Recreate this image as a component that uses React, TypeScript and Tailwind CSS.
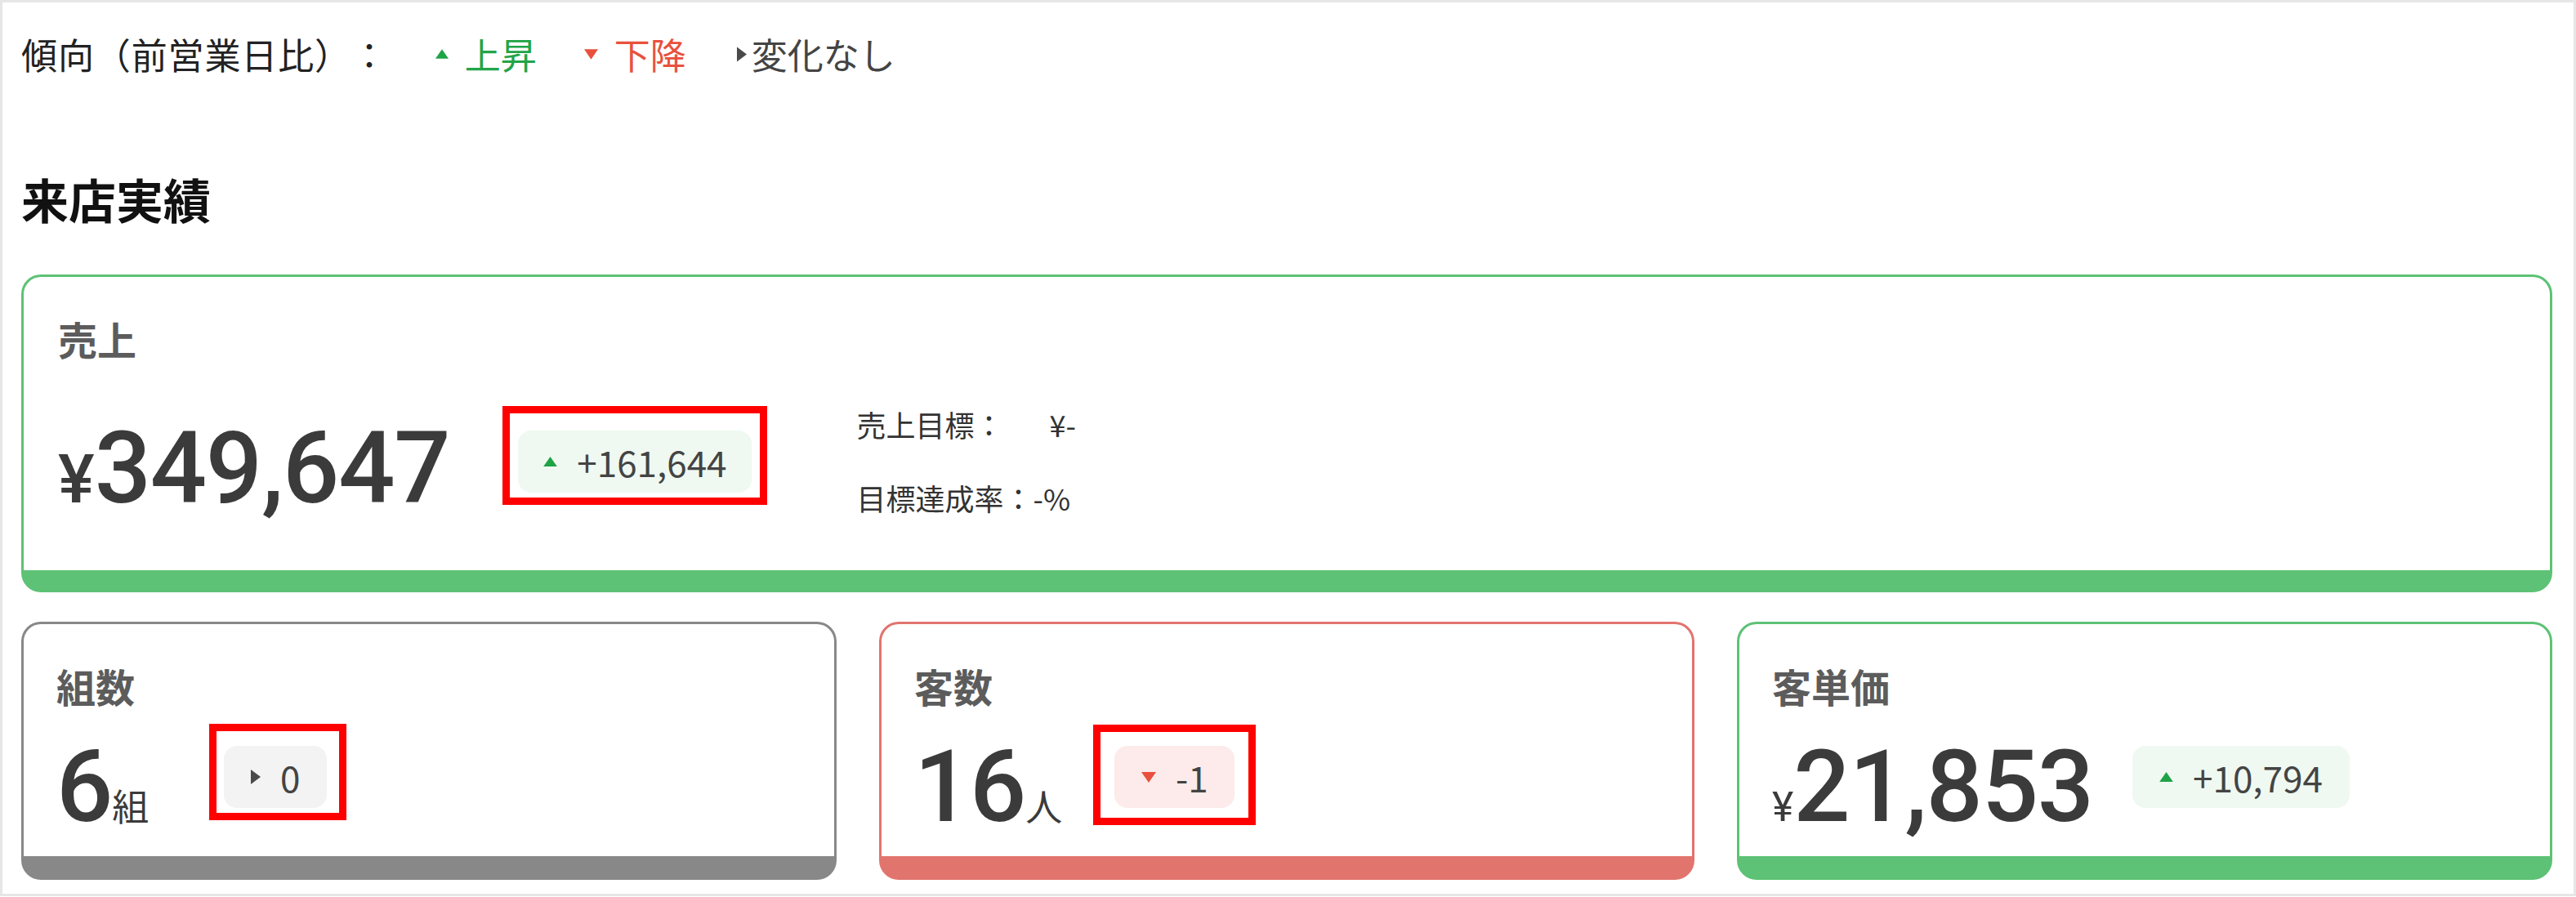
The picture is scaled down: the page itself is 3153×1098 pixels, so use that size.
import React from "react";

type Trend = "up" | "down" | "flat";

const Tri = ({ dir, size = "md" }: { dir: Trend; size?: "sm" | "md" }) => {
  if (dir === "up")
    return (
      <svg
        viewBox="0 0 18 13"
        className={size === "sm" ? "h-[12px] w-[16px]" : "h-[12px] w-[17px]"}
      >
        <path d="M9 0L18 13H0Z" fill="#1fa347" />
      </svg>
    );
  if (dir === "down")
    return (
      <svg
        viewBox="0 0 18 13"
        className={size === "sm" ? "h-[13px] w-[17px]" : "h-[13px] w-[18px]"}
      >
        <path d="M0 0H18L9 13Z" fill="#e8513d" />
      </svg>
    );
  return (
    <svg
      viewBox="0 0 12 18"
      className={size === "sm" ? "h-[19px] w-[12px]" : "h-[18px] w-[12px]"}
    >
      <path d="M0 0L12 9L0 18Z" fill="#4a4a4a" />
    </svg>
  );
};

const badgeBg: Record<Trend, string> = {
  up: "bg-[#eff9f1]",
  down: "bg-[#fcebea]",
  flat: "bg-[#f3f3f3]",
};

// red annotation frames drawn over some badges
const Badge = ({
  trend,
  value,
  width,
  mark,
}: {
  trend: Trend;
  value: string;
  width: string;
  mark?: string;
}) => (
  <div
    className={`relative flex h-[76px] shrink-0 items-center justify-center gap-[24px] rounded-[16px] text-[44px] leading-none text-[#444] ${badgeBg[trend]} ${width}`}
  >
    <Tri dir={trend} />
    <span>{value}</span>
    {mark && (
      <div
        className={`pointer-events-none absolute border-[9px] border-[#ff0000] ${mark}`}
      />
    )}
  </div>
);

const cardColor: Record<Trend, string> = {
  up: "border-[#5dc275]",
  down: "border-[#e2746e]",
  flat: "border-[#888888]",
};

const num = "font-['Roboto',sans-serif] font-medium tracking-[-0.01em]";

const SmallCard = ({
  trend,
  label,
  yen,
  value,
  unit,
  badge,
  badgeWidth,
  badgeGap,
  mark,
}: {
  trend: Trend;
  label: string;
  yen?: boolean;
  value: string;
  unit?: string;
  badge: string;
  badgeWidth: string;
  badgeGap: string;
  mark?: string;
}) => (
  <div
    className={`h-[316px] rounded-[24px] border-[3px] border-b-[29px] bg-white pl-[40px] pt-[51px] ${cardColor[trend]}`}
  >
    <div className="text-[48px] font-semibold leading-none text-[#5c5c5c]">
      {label}
    </div>
    <div className="mt-[28px] flex items-start">
      <div className="mt-[12px] flex items-baseline text-[#3b3b3b]">
        {yen && (
          <span className="font-['Roboto',sans-serif] text-[50px] leading-none">
            ¥
          </span>
        )}
        <span className={`text-[122px] leading-none ${num}`}>{value}</span>
        {unit && <span className="text-[45px] leading-none">{unit}</span>}
      </div>
      <div className={`mt-[22px] ${badgeGap}`}>
        <Badge trend={trend} value={badge} width={badgeWidth} mark={mark} />
      </div>
    </div>
  </div>
);

export default function App() {
  return (
    <div className="h-[1097px] w-[3153px] border-[3px] border-[#e6e6e6] bg-white pl-[23px] pr-[26px] font-['Noto_Sans_CJK_JP',sans-serif] [text-spacing-trim:space-all]">
      {/* legend */}
      <div className="flex h-[126px] items-center text-[44px] leading-none text-[#222]">
        <span className="tracking-[0.02em]">傾向（前営業日比）：</span>
        <span className="ml-[58px] flex items-center gap-[20px] text-[#22a447]">
          <Tri dir="up" size="sm" />
          上昇
        </span>
        <span className="ml-[58px] flex items-center gap-[20px] text-[#e8513d]">
          <Tri dir="down" size="sm" />
          下降
        </span>
        <span className="ml-[62px] flex items-center gap-[6px] text-[#444]">
          <Tri dir="flat" size="sm" />
          変化なし
        </span>
      </div>

      <h2 className="mt-[85px] text-[58px] font-bold leading-none text-[#111]">
        来店実績
      </h2>

      {/* sales */}
      <div className="mt-[64px] h-[389px] rounded-[24px] border-[3px] border-b-[27px] border-[#5dc275] bg-white pl-[42px] pt-[51px]">
        <div className="text-[48px] font-semibold leading-none text-[#5c5c5c]">
          売上
        </div>
        <div className="mt-[63px] flex items-start">
          <div className="mt-[12px] flex items-baseline text-[#3b3b3b]">
            <span className="font-['Roboto',sans-serif] text-[84px] font-medium leading-none">
              ¥
            </span>
            <span className={`text-[122px] leading-none ${num}`}>349,647</span>
          </div>
          <div className="ml-[84px] mt-[26px]">
            <Badge
              trend="up"
              value="+161,644"
              width="w-[286px]"
              mark="left-[-19px] right-[-19px] top-[-30px] bottom-[-15px]"
            />
          </div>
          <div className="ml-[128px] text-[36px] leading-none text-[#333]">
            <div className="flex">
              <span>売上目標：</span>
              <span className="ml-[56px]">¥-</span>
            </div>
            <div className="mt-[54px]">目標達成率：-%</div>
          </div>
        </div>
      </div>

      <div className="mt-[36px] grid grid-cols-3 gap-[52px]">
        <SmallCard
          trend="flat"
          label="組数"
          value="6"
          unit="組"
          badge="0"
          badgeWidth="w-[126px]"
          badgeGap="ml-[92px]"
          mark="left-[-18px] right-[-24px] top-[-27px] bottom-[-15px]"
        />
        <SmallCard
          trend="down"
          label="客数"
          value="16"
          unit="人"
          badge="-1"
          badgeWidth="w-[147px]"
          badgeGap="ml-[64px]"
          mark="left-[-26px] right-[-26px] top-[-26px] bottom-[-21px]"
        />
        <SmallCard
          trend="up"
          label="客単価"
          yen
          value="21,853"
          badge="+10,794"
          badgeWidth="w-[266px]"
          badgeGap="ml-[48px]"
        />
      </div>
    </div>
  );
}
